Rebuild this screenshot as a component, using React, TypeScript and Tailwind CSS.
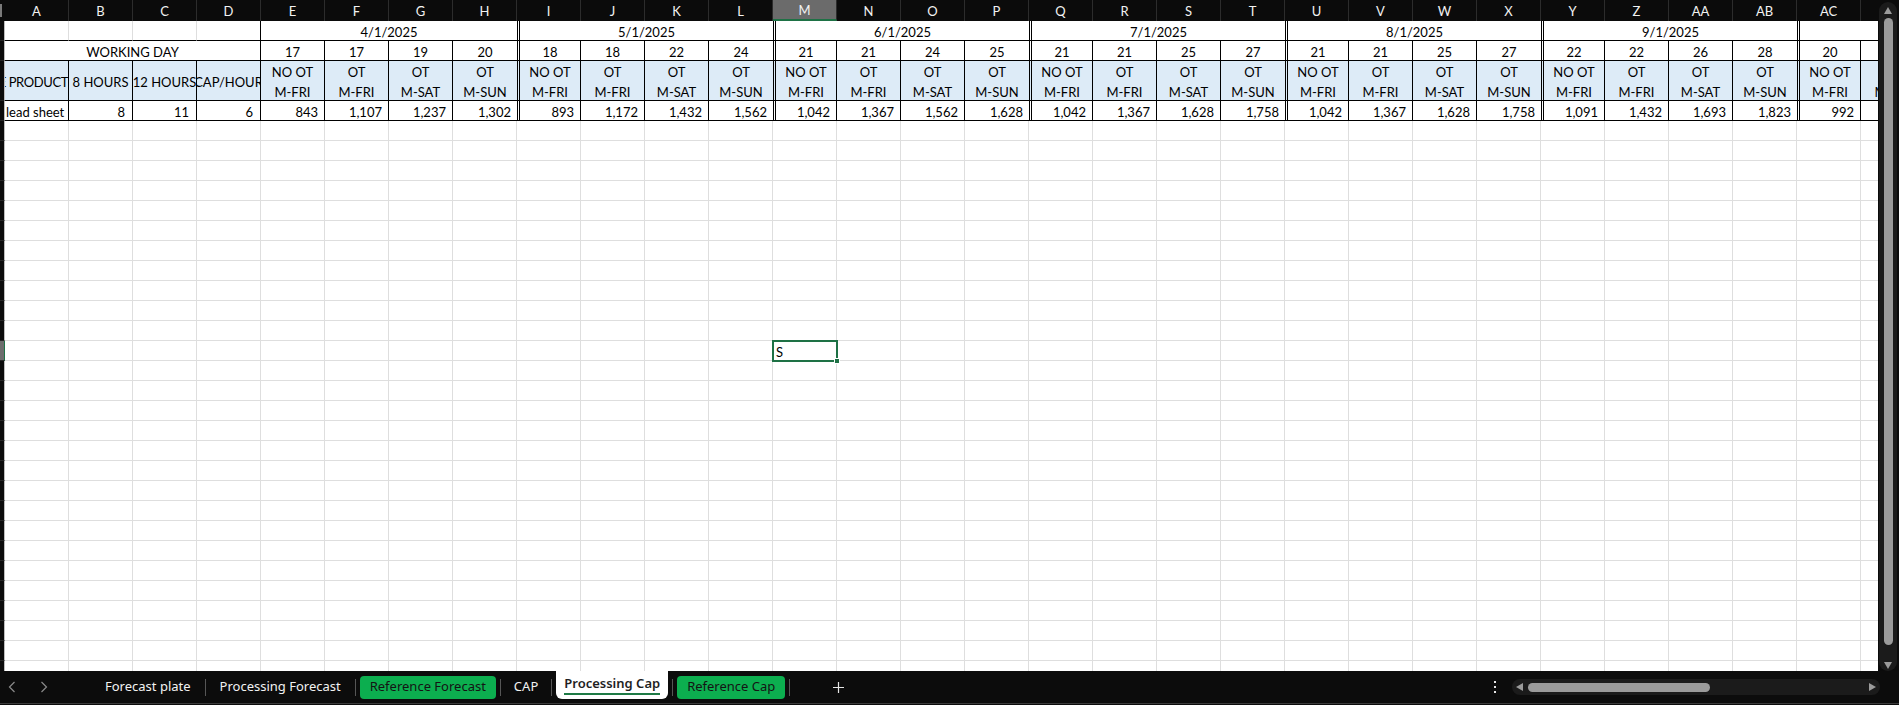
import React from "react";

type DataCol = {
  day: number;
  top: string;
  bottom: string;
  value: string;
  first: boolean;
  last: boolean;
  gi: number;
};

const LETTERS = [
  "A", "B", "C", "D", "E", "F", "G", "H", "I", "J", "K", "L", "M", "N", "O",
  "P", "Q", "R", "S", "T", "U", "V", "W", "X", "Y", "Z", "AA", "AB", "AC", "AD",
];

const LABELS = [
  ["NO OT", "M-FRI"],
  ["OT", "M-FRI"],
  ["OT", "M-SAT"],
  ["OT", "M-SUN"],
];

const GROUPS = [
  { date: "4/1/2025", days: [17, 17, 19, 20], values: ["843", "1,107", "1,237", "1,302"] },
  { date: "5/1/2025", days: [18, 18, 22, 24], values: ["893", "1,172", "1,432", "1,562"] },
  { date: "6/1/2025", days: [21, 21, 24, 25], values: ["1,042", "1,367", "1,562", "1,628"] },
  { date: "7/1/2025", days: [21, 21, 25, 27], values: ["1,042", "1,367", "1,628", "1,758"] },
  { date: "8/1/2025", days: [21, 21, 25, 27], values: ["1,042", "1,367", "1,628", "1,758"] },
  { date: "9/1/2025", days: [22, 22, 26, 28], values: ["1,091", "1,432", "1,693", "1,823"] },
  // 10/1 group is cut off by the window, only AC and AD show
  { date: "", days: [20, 20], values: ["992", "1,302"] },
];

const DATA: DataCol[] = GROUPS.flatMap((g, gi) =>
  g.days.map((day, i) => ({
    day,
    top: LABELS[i][0],
    bottom: LABELS[i][1],
    value: g.values[i],
    first: i === 0,
    last: i === 3,
    gi,
  }))
);

const GRID = "h-[20px] border-r border-b border-r-[#dedede] border-b-[#dedede]";
const SPAN: Record<number, string> = { 2: "col-span-2", 4: "col-span-4" };
const SELECTED_ROW = 16;

const rightBorder = (last: boolean) => (last ? "border-r-0" : "border-r border-r-black");
const leftBorder = (first: boolean, gi: number) =>
  first && gi > 0 ? "border-l-[3px] border-l-black border-double" : "";

const RowHead = ({ selected = false, tall = false }: { selected?: boolean; tall?: boolean }) => (
  <div
    className={`${tall ? "h-[40px]" : "h-[20px]"} border-b border-b-[#262626] border-r ${
      selected ? "bg-[#6d6d6d] border-r-[#1e7145]" : "bg-[#0b0b0b] border-r-[#bdbdbd]"
    }`}
  />
);

const Tri = ({ dir }: { dir: "up" | "down" | "left" | "right" }) => {
  const pts = {
    up: "0,7 4,0 8,7",
    down: "0,0 8,0 4,7",
    left: "7,0 7,8 0,4",
    right: "0,0 7,4 0,8",
  }[dir];
  const vertical = dir === "up" || dir === "down";
  return (
    <svg width={vertical ? 8 : 7} height={vertical ? 7 : 8} className="shrink-0">
      <polygon points={pts} fill="#9b9b9b" />
    </svg>
  );
};

const Sep = () => <div className="w-px h-[17px] bg-[#565656] shrink-0" />;

const Sheet: React.FC = () => {
  const bodyRows = Array.from({ length: 28 }, (_, i) => i + 5);
  return (
    <div className="flex-1 h-full overflow-hidden bg-white">
      <div className="grid grid-cols-[5px_repeat(30,64px)] font-['Lato',sans-serif] text-[13px] text-black">
        {/* column headings */}
        <div className="h-[21px] bg-[#0b0b0b] flex items-center">
          <div className="w-[2px] h-[13px] bg-[#7a7a7a]" />
        </div>
        {LETTERS.map((l) => (
          <div
            key={l}
            className={`h-[21px] flex items-center justify-center pt-[2px] leading-none text-[#f2f2f2] border-r border-r-[#2c2c2c] ${
              l === "M" ? "bg-[#6b6b6b] border-b-2 border-b-[#1e7145]" : "bg-[#0b0b0b]"
            }`}
          >
            {l}
          </div>
        ))}

        {/* row 1: months */}
        <RowHead />
        <div className="h-[20px] border-r border-r-[#dedede] border-b border-b-black" />
        <div className="h-[20px] border-r border-r-[#dedede] border-b border-b-black" />
        <div className="h-[20px] border-r border-r-[#dedede] border-b border-b-black" />
        <div className="h-[20px] border-r border-r-black border-b border-b-black" />
        {GROUPS.map((g, gi) => (
          <div
            key={gi}
            className={`${SPAN[g.days.length]} h-[20px] flex items-end justify-center pb-[1.5px] leading-none overflow-hidden whitespace-nowrap border-b border-b-black ${rightBorder(
              g.days.length === 4
            )} ${leftBorder(true, gi)}`}
          >
            {g.date}
          </div>
        ))}

        {/* row 2: working days */}
        <RowHead />
        <div className="col-span-4 h-[20px] flex items-end justify-center pb-[1.5px] leading-none border-r border-r-black border-b border-b-black">
          WORKING DAY
        </div>
        {DATA.map((c, i) => (
          <div
            key={i}
            className={`h-[20px] flex items-end justify-center pb-[1.5px] leading-none overflow-hidden border-b border-b-black ${rightBorder(
              c.last
            )} ${leftBorder(c.first, c.gi)}`}
          >
            {c.day}
          </div>
        ))}

        {/* row 3: labels */}
        <RowHead tall />
        <div className="h-[40px] bg-[#ddebf7] flex items-end justify-end pb-[11.5px] leading-none tracking-[-0.4px] overflow-hidden whitespace-nowrap border-r border-r-black border-b border-b-black">
          TYPE PRODUCT
        </div>
        <div className="h-[40px] bg-[#ddebf7] flex items-end justify-center pb-[11.5px] leading-none overflow-hidden whitespace-nowrap border-r border-r-black border-b border-b-black">
          8 HOURS
        </div>
        <div className="h-[40px] bg-[#ddebf7] flex items-end justify-center pb-[11.5px] leading-none overflow-hidden whitespace-nowrap border-r border-r-black border-b border-b-black">
          12 HOURS
        </div>
        <div className="h-[40px] bg-[#ddebf7] flex items-end justify-center pb-[11.5px] leading-none overflow-hidden whitespace-nowrap border-r border-r-black border-b border-b-black">
          CAP/HOUR
        </div>
        {DATA.map((c, i) => (
          <div
            key={i}
            className={`h-[40px] bg-[#ddebf7] flex flex-col overflow-hidden whitespace-nowrap border-b border-b-black ${rightBorder(
              c.last
            )} ${leftBorder(c.first, c.gi)}`}
          >
            <div className="h-[20px] shrink-0 flex items-end justify-center pb-[2.5px] leading-none">{c.top}</div>
            <div className="h-[20px] shrink-0 flex items-end justify-center pb-[2.5px] leading-none">{c.bottom}</div>
          </div>
        ))}

        {/* row 4: values */}
        <RowHead />
        <div className="h-[20px] flex items-end pl-[1px] pb-[1.5px] leading-none overflow-hidden whitespace-nowrap border-r border-r-black border-b border-b-black">
          lead sheet
        </div>
        {["8", "11", "6"].map((v) => (
          <div
            key={v}
            className="h-[20px] flex items-end justify-end pr-[7px] pb-[1.5px] leading-none border-r border-r-black border-b border-b-black"
          >
            {v}
          </div>
        ))}
        {DATA.map((c, i) => (
          <div
            key={i}
            className={`h-[20px] flex items-end justify-end pr-[6px] pb-[1.5px] leading-none overflow-hidden whitespace-nowrap border-b border-b-black ${rightBorder(
              c.last
            )} ${leftBorder(c.first, c.gi)}`}
          >
            {c.value}
          </div>
        ))}

        {/* empty rows */}
        {bodyRows.map((r) => (
          <React.Fragment key={r}>
            <RowHead selected={r === SELECTED_ROW} />
            {LETTERS.map((l) =>
              r === SELECTED_ROW && l === "M" ? (
                <div key={l} className={`${GRID} relative flex items-end pl-[3px] pb-[1.5px] leading-none`}>
                  S
                  <div className="absolute left-[-1px] top-[-1px] w-[66px] h-[22px] border-2 border-[#1e7145] z-10">
                    <div className="absolute right-[-4px] bottom-[-4px] w-[6px] h-[6px] bg-[#1e7145] border border-white" />
                  </div>
                </div>
              ) : (
                <div key={l} className={GRID} />
              )
            )}
          </React.Fragment>
        ))}
      </div>
    </div>
  );
};

const VScroll: React.FC = () => (
  <div className="w-[21px] h-full bg-[#0b0b0b] pl-[1px] pr-[2px] pt-[2px] shrink-0">
    <div className="h-full rounded-[9px] bg-[#1b1b1b] flex flex-col items-center pt-[5px] pb-[2px]">
      <Tri dir="up" />
      <div className="mt-[4px] w-[9px] flex-1 rounded-full bg-[#9b9b9b]" />
      <div className="mt-[17px]">
        <Tri dir="down" />
      </div>
    </div>
  </div>
);

const TabBar: React.FC = () => (
  <div className="h-[34px] bg-[#0c0c0c] flex flex-col font-['Noto_Sans',sans-serif] text-[13px] shrink-0">
    <div className="h-[32px] flex items-center">
      <div className="flex items-center pl-[8px]">
        <svg width="8" height="12">
          <polyline points="6.5,1 1.5,6 6.5,11" fill="none" stroke="#8a8a8a" strokeWidth="1.2" />
        </svg>
        <svg width="8" height="12" className="ml-[24px]">
          <polyline points="1.5,1 6.5,6 1.5,11" fill="none" stroke="#8a8a8a" strokeWidth="1.2" />
        </svg>
      </div>
      <div className="flex items-center h-full ml-[43px]">
        <div className="mx-[4px] px-[10px] text-[#f2f2f2]">Forecast plate</div>
        <Sep />
        <div className="mx-[4px] px-[10px] text-[#f2f2f2]">Processing Forecast</div>
        <Sep />
        <div className="mx-[4px] px-[10px] h-[23px] rounded-[4px] bg-[#0cae4f] text-[#141414] flex items-center">
          Reference Forecast
        </div>
        <Sep />
        <div className="mx-[4px] px-[9px] text-[#f2f2f2]">CAP</div>
        <Sep />
        <div className="mx-[4px] px-[8px] self-start h-[28px] bg-white rounded-b-[6px] text-[#1f1f1f] font-semibold flex flex-col items-center pt-[4px]">
          <span className="leading-[16px]">Processing Cap</span>
          <span className="mt-[2px] h-[2px] w-full bg-[#1e7a45]" />
        </div>
        <Sep />
        <div className="mx-[4px] px-[10px] h-[23px] rounded-[4px] bg-[#0cae4f] text-[#141414] flex items-center">
          Reference Cap
        </div>
        <Sep />
        <svg width="11" height="11" className="ml-[43px]">
          <path d="M5.5 0v11M0 5.5h11" stroke="#e6e6e6" strokeWidth="1.2" />
        </svg>
      </div>
      <div className="ml-auto flex items-center">
        <svg width="4" height="12">
          <rect x="1" y="0" width="2" height="2" fill="#e6e6e6" />
          <rect x="1" y="5" width="2" height="2" fill="#e6e6e6" />
          <rect x="1" y="10" width="2" height="2" fill="#e6e6e6" />
        </svg>
        <div className="ml-[15px] w-[368px] h-[16px] rounded-full bg-[#1b1b1b] flex items-center pl-[4px] pr-[4px]">
          <Tri dir="left" />
          <div className="ml-[5px] w-[182px] h-[9px] rounded-full bg-[#9b9b9b]" />
          <div className="ml-auto">
            <Tri dir="right" />
          </div>
        </div>
        <div className="w-[19px]" />
      </div>
    </div>
    <div className="h-px bg-[#3a3a3a]" />
    <div className="h-px" />
  </div>
);

export default function App() {
  return (
    <div className="w-[1899px] h-[705px] flex flex-col overflow-hidden bg-[#0c0c0c]">
      <div className="h-[671px] flex shrink-0">
        <Sheet />
        <VScroll />
      </div>
      <TabBar />
    </div>
  );
}
